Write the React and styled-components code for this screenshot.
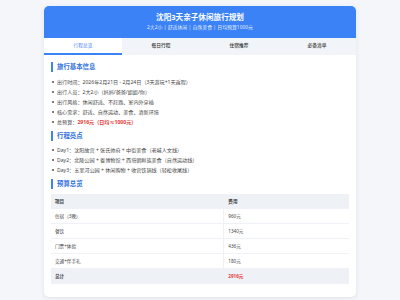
import React from 'react'
import styled, { createGlobalStyle } from 'styled-components'

const Global = createGlobalStyle`
  html, body {
    margin: 0;
    padding: 0;
    background: #f4f6fa;
    font-family: "Noto Sans", "Noto Sans CJK SC", sans-serif;
    color: #333;
  }
`

const Page = styled.div`
  padding: 6px 0 8px;
`

const Card = styled.div`
  width: 312px;
  margin: 0 auto;
  background: #fff;
  border-radius: 5px;
  overflow: hidden;
  box-shadow: 0 1px 4px rgba(30, 50, 90, 0.1);
`

const Header = styled.div`
  background: #3b82f6;
  color: #fff;
  text-align: center;
  padding: 6px 0 6px;
`

const Title = styled.h1`
  margin: 0;
  font-size: 7.6px;
  line-height: 11px;
  font-weight: 700;
`

const Subtitle = styled.div`
  font-size: 4.9px;
  line-height: 9px;
  color: rgba(255, 255, 255, 0.88);
`

const Tabs = styled.div`
  display: grid;
  grid-template-columns: repeat(4, 1fr);
  background: #f1f4f8;
`

const Tab = styled.div`
  height: 14.5px;
  display: flex;
  align-items: center;
  justify-content: center;
  font-size: 4.7px;
  font-weight: ${p => (p.$active ? 400 : 500)};
  color: ${p => (p.$active ? '#3b82f6' : '#333')};
  background: ${p => (p.$active ? '#fff' : 'transparent')};
  border-bottom: 2px solid ${p => (p.$active ? '#3b82f6' : 'transparent')};
`

const Content = styled.div`
  padding: 3.5px 7px 13px;
`

const Heading = styled.h2`
  margin: 4px 0 4.5px;
  padding-left: 4px;
  border-left: 2px solid #3b82f6;
  font-size: 6.4px;
  line-height: 10px;
  font-weight: 700;
  color: #3170e0;
`

const List = styled.ul`
  list-style: none;
  margin: 0;
  padding: 0;
`

const Item = styled.li`
  position: relative;
  padding-left: 6px;
  font-size: 5.1px;
  line-height: 10px;
  color: #444;

  &::before {
    content: "";
    position: absolute;
    left: 0.5px;
    top: 4px;
    width: 2px;
    height: 2px;
    border-radius: 50%;
    background: #555;
  }
`

const Red = styled.span`
  color: #e53935;
  font-weight: 700;
`

const Table = styled.table`
  width: 100%;
  border-collapse: collapse;
  margin-top: 1px;
  font-size: 4.6px;
  color: #444;

  td, th {
    height: 14px;
    padding: 0 4px;
    text-align: left;
    border-bottom: 1px solid #eef1f5;
  }
  td + td, th + th {
    border-left: 1px solid #eef1f5;
  }
  th {
    font-weight: 700;
    background: #eef2f7;
  }
  col:first-child {
    width: 58%;
  }
`

const TotalRow = styled.tr`
  background: #eef2f7;
  font-weight: 700;
`

const info = [
  ['出行时间：', '2026年2月21日 - 2月24日（3天游玩+1天返程）'],
  ['出行人员：', '2大2小（妈妈/爸爸/姐姐/你）'],
  ['出行风格：', '休闲舒适、不赶路、室内外穿插'],
  ['核心需求：', '舒适、自然运动、美食、清新环境'],
]

const days = [
  'Day1：沈阳故宫 + 张氏帅府 + 中街美食（老城人文线）',
  'Day2：北陵公园 + 省博物馆 + 西塔朝鲜族美食（自然运动线）',
  'Day3：五里河公园 + 休闲购物 + 收官铁锅线（轻松收尾线）',
]

const budget = [
  ['住宿（3晚）', '960元'],
  ['餐饮', '1340元'],
  ['门票+体验', '436元'],
  ['交通+伴手礼', '180元'],
]

const tabs = ['行程总览', '每日行程', '住宿推荐', '必备清单']

export default function App() {
  return (
    <Page>
      <Global />
      <Card>
        <Header>
          <Title>沈阳3天亲子休闲旅行规划</Title>
          <Subtitle>2大2小 | 舒适休闲 | 自然美食 | 日均预算1000元</Subtitle>
        </Header>
        <Tabs>
          {tabs.map((t, i) => (
            <Tab key={t} $active={i === 0}>{t}</Tab>
          ))}
        </Tabs>
        <Content>
          <Heading>旅行基本信息</Heading>
          <List>
            {info.map(([k, v]) => (
              <Item key={k}>{k}{v}</Item>
            ))}
            <Item>总预算：<Red>2916元（日均≈1000元）</Red></Item>
          </List>

          <Heading>行程亮点</Heading>
          <List>
            {days.map(d => <Item key={d}>{d}</Item>)}
          </List>

          <Heading>预算总览</Heading>
          <Table>
            <colgroup><col /><col /></colgroup>
            <thead>
              <tr><th>项目</th><th>费用</th></tr>
            </thead>
            <tbody>
              {budget.map(([k, v]) => (
                <tr key={k}><td>{k}</td><td>{v}</td></tr>
              ))}
              <TotalRow>
                <td>总计</td>
                <td><Red>2916元</Red></td>
              </TotalRow>
            </tbody>
          </Table>
        </Content>
      </Card>
    </Page>
  )
}
